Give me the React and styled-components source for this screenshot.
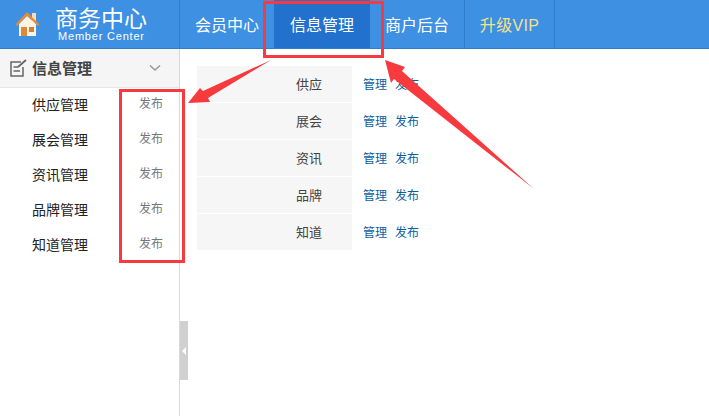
import React from "react";
import styled, { createGlobalStyle } from "styled-components";

const GlobalStyle = createGlobalStyle`
  html, body {
    margin: 0;
    padding: 0;
    background: #fff;
  }
  body {
    font-family: "Noto Sans CJK SC", "Liberation Sans", sans-serif;
    font-size: 12px;
    color: #333;
  }
`;

const Page = styled.div`
  position: relative;
  width: 709px;
  height: 416px;
  overflow: hidden;
`;

const Header = styled.header`
  display: flex;
  height: 48px;
  background: #3e90e2;
  border-bottom: 1px solid #2f7dcb;
`;

const Brand = styled.div`
  display: flex;
  width: 179px;
  border-right: 1px solid #2f7dcb;
`;

const LogoBox = styled.div`
  width: 55px;
  padding: 11px 0 0 15px;
  box-sizing: border-box;
`;

const BrandText = styled.div`
  display: flex;
  flex-direction: column;
  color: #fff;
`;

const BrandTitle = styled.div`
  font-size: 23px;
  line-height: 24px;
  margin-top: 5px;
  white-space: nowrap;
`;

const BrandSub = styled.div`
  font-family: "Liberation Sans", sans-serif;
  font-size: 11px;
  line-height: 12px;
  letter-spacing: 0.8px;
  margin: 1px 0 0 3px;
  white-space: nowrap;
`;

const Nav = styled.nav`
  display: flex;
`;

const NavItem = styled.a`
  display: flex;
  align-items: center;
  justify-content: center;
  width: ${(p) => p.$w}px;
  font-size: 16px;
  font-family: ${(p) =>
    p.$vip ? '"Liberation Sans", "Noto Sans CJK SC", sans-serif' : "inherit"};
  letter-spacing: ${(p) => (p.$vip ? "0.3px" : "0")};
  color: ${(p) => (p.$vip ? "#f5e08c" : "#fff")};
  background: ${(p) => (p.$active ? "#2271cc" : "transparent")};
  border-right: ${(p) => (p.$line ? "1px solid #2f7dcb" : "none")};
  box-sizing: border-box;
  white-space: nowrap;
`;

const Body = styled.div`
  display: flex;
  height: 367px;
`;

const Sidebar = styled.aside`
  position: relative;
  width: 180px;
  box-sizing: border-box;
  border-right: 1px solid #d9d9d9;
  flex: none;
`;

const SideHead = styled.div`
  display: flex;
  align-items: center;
  height: 38px;
  padding: 0 18px 0 10px;
  background: #f5f5f5;
  border-bottom: 1px solid #e6e6e6;
  font-size: 15px;
  font-weight: 700;
  color: #444;
`;

const SideTitle = styled.span`
  margin: 0 0 2px 5px;
  flex: 1;
`;

const SideList = styled.ul`
  list-style: none;
  margin: 0;
  padding: 0;
`;

const SideRow = styled.li`
  display: flex;
  justify-content: space-between;
  align-items: center;
  height: 35px;
  padding: 0 16px 4px 32px;
  box-sizing: border-box;
  font-size: 14px;
  line-height: 20px;
  color: #222;
`;

const SidePost = styled.a`
  font-size: 12px;
  color: #777;
  margin-bottom: 2px;
`;

const Toggle = styled.div`
  position: absolute;
  right: -9px;
  top: 272px;
  width: 8px;
  height: 59px;
  background: #d0d0d0;
  display: flex;
  align-items: center;
  justify-content: center;
`;

const ToggleArrow = styled.span`
  width: 0;
  height: 0;
  border-top: 4px solid transparent;
  border-bottom: 4px solid transparent;
  border-right: 4px solid #fff;
`;

const Main = styled.main`
  padding: 17px 0 0 17px;
`;

const Table = styled.div`
  display: flex;
  flex-direction: column;
  gap: 1px;
`;

const Row = styled.div`
  display: flex;
  height: 36px;
  align-items: center;
`;

const RowLabel = styled.div`
  width: 155px;
  height: 100%;
  background: #f6f6f6;
  display: flex;
  align-items: center;
  justify-content: flex-end;
  padding: 0 30px 2px 0;
  box-sizing: border-box;
  font-size: 13px;
  color: #444;
`;

const RowLink = styled.a`
  color: #0b5e9e;
  margin: 0 0 2px ${(p) => p.$ml}px;
`;

const RedBox = styled.div`
  position: absolute;
  left: ${(p) => p.$x}px;
  top: ${(p) => p.$y}px;
  width: ${(p) => p.$w}px;
  height: ${(p) => p.$h}px;
  border: 3px solid #f73a3e;
  box-sizing: border-box;
`;

const Arrows = styled.svg`
  position: absolute;
  left: 0;
  top: 0;
`;

const HouseIcon = () => (
  <svg width="26" height="26" viewBox="0 0 26 26">
    <rect x="17" y="2" width="4" height="10" fill="#f4dcc0" />
    <path d="M4 13 L12 5 L21 13 V25 H4 Z" fill="#fbf3e4" />
    <path d="M0.5 13.5 L12 1 L24.5 13.5 L23 15 L12 4.5 L2 15 Z" fill="#ee8a2c" />
    <rect x="6" y="16" width="6" height="9" fill="#d98a3a" />
    <rect x="14" y="16" width="5" height="5" fill="#d07f34" />
  </svg>
);

const EditIcon = () => (
  <svg width="17" height="18" viewBox="0 0 17 18" fill="none" stroke="#666" strokeWidth="1.5">
    <path d="M11 3 H1 V17 H13 V8" />
    <path d="M3.5 8 H8 M3.5 12 H10" />
    <path d="M8 8 L16 1" strokeWidth="1.8" />
  </svg>
);

const Chevron = () => (
  <svg width="12" height="8" viewBox="0 0 12 8" fill="none" stroke="#999" strokeWidth="1.6">
    <path d="M1 1.5 L6 6 L11 1.5" />
  </svg>
);

const sideItems = ["供应管理", "展会管理", "资讯管理", "品牌管理", "知道管理"];
const rows = ["供应", "展会", "资讯", "品牌", "知道"];

export default function App() {
  return (
    <Page>
      <GlobalStyle />
      <Header>
        <Brand>
          <LogoBox>
            <HouseIcon />
          </LogoBox>
          <BrandText>
            <BrandTitle>商务中心</BrandTitle>
            <BrandSub>Member Center</BrandSub>
          </BrandText>
        </Brand>
        <Nav>
          <NavItem $w={94}>会员中心</NavItem>
          <NavItem $w={96} $active>信息管理</NavItem>
          <NavItem $w={95} $line>商户后台</NavItem>
          <NavItem $w={90} $line $vip>升级VIP</NavItem>
        </Nav>
      </Header>
      <Body>
        <Sidebar>
          <SideHead>
            <EditIcon />
            <SideTitle>信息管理</SideTitle>
            <Chevron />
          </SideHead>
          <SideList>
            {sideItems.map((item) => (
              <SideRow key={item}>
                <span>{item}</span>
                <SidePost>发布</SidePost>
              </SideRow>
            ))}
          </SideList>
          <Toggle>
            <ToggleArrow />
          </Toggle>
        </Sidebar>
        <Main>
          <Table>
            {rows.map((row) => (
              <Row key={row}>
                <RowLabel>{row}</RowLabel>
                <RowLink $ml={11}>管理</RowLink>
                <RowLink $ml={8}>发布</RowLink>
              </Row>
            ))}
          </Table>
        </Main>
      </Body>
      <RedBox $x={263} $y={1} $w={121} $h={57} />
      <RedBox $x={119} $y={89} $w={66} $h={174} />
      <Arrows width="709" height="416" viewBox="0 0 709 416">
        <path d="M271 60 L203 91 L200 88 L188 103 L210 102 L208 98 Z" fill="#f73a3e" />
        <path d="M534 189 L402 71 L405 67 L385 60 L391 83 L394 79 Z" fill="#f73a3e" />
      </Arrows>
    </Page>
  );
}
